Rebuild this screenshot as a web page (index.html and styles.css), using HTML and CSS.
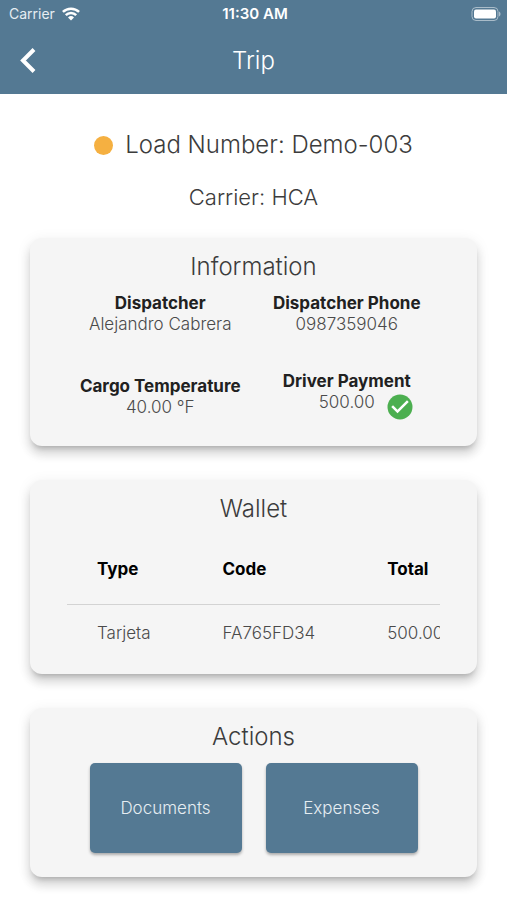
FILE: index.html
```
<!DOCTYPE html>
<html lang="en">
<head>
<meta charset="utf-8">
<meta name="viewport" content="width=device-width, initial-scale=1">
<title>Trip</title>
<link rel="stylesheet" href="styles.css">
</head>
<body>
<header class="top">
  <div class="status">
    <div class="status-carrier">
      <span>Carrier</span>
      <svg class="wifi" viewBox="0 0 20 14" aria-hidden="true">
        <path d="M1.900 4.900a11.700 11.700 0 0 1 16.200 0" />
        <path d="M4.800 8.200a7.300 7.300 0 0 1 10.400 0" />
        <path class="wifi-dot" d="M10 13.500 7 10.500a4.300 4.300 0 0 1 6 0z" />
      </svg>
    </div>
    <div class="status-time">11:30 AM</div>
    <div class="status-battery">
      <svg class="battery" viewBox="0 0 30 14" aria-hidden="true">
        <rect class="battery-case" x="1" y="0.500" width="26" height="13" rx="4" />
        <rect class="battery-level" x="3" y="2.500" width="22" height="9" rx="2" />
        <path class="battery-tip" d="M28 4.500c2 .8 2 4.200 0 5z" />
      </svg>
    </div>
  </div>
  <nav class="bar">
    <button class="back" type="button" aria-label="Back">
      <svg viewBox="0 0 16 26" aria-hidden="true"><path d="M14 1.500 3 12.500l11 11" /></svg>
    </button>
    <h1 class="bar-title">Trip</h1>
  </nav>
</header>
<main class="page">
  <div class="load"><span class="dot"></span><h2 class="load-number">Load Number: Demo-003</h2></div>
  <p class="carrier">Carrier: HCA</p>

  <section class="card">
    <h2 class="card-title">Information</h2>
    <dl class="info">
      <div><dt>Dispatcher</dt><dd>Alejandro Cabrera</dd></div>
      <div><dt>Dispatcher Phone</dt><dd>0987359046</dd></div>
      <div><dt>Cargo Temperature</dt><dd>40.00 °F</dd></div>
      <div>
        <dt>Driver Payment</dt>
        <dd class="payment">
          <span class="amount">500.00</span>
          <svg class="check" viewBox="0 0 24 24" aria-hidden="true"><path class="check-disc" d="M12 2a10 10 0 1 0 0 20 10 10 0 0 0 0-20z" /><path class="check-tick" d="M10 17l-5-5 1.410-1.410L10 14.170l7.590-7.590L19 8z" /></svg>
        </dd>
      </div>
    </dl>
  </section>

  <section class="card">
    <h2 class="card-title">Wallet</h2>
    <div class="table-scroll">
      <table class="wallet">
        <thead><tr><th>Type</th><th>Code</th><th>Total</th></tr></thead>
        <tbody><tr><td>Tarjeta</td><td>FA765FD34</td><td>500.00</td></tr></tbody>
      </table>
    </div>
  </section>

  <section class="card">
    <h2 class="card-title">Actions</h2>
    <div class="actions">
      <button class="action" type="button">Documents</button>
      <button class="action" type="button">Expenses</button>
    </div>
  </section>
</main>
</body>
</html>
```
FILE: styles.css
```
* { box-sizing: border-box; }

body {
  margin: 0;
  background: #fff;
  color: #3c3c3c;
  font: 300 17px/21px Inter, "Liberation Sans", sans-serif;
}

h1, h2, p, dl, dd { margin: 0; font-weight: 300; }
button { border: 0; padding: 0; font: inherit; color: inherit; cursor: pointer; }

.top { background: #547993; color: #fff; }

.status {
  display: grid;
  grid-template-columns: 1fr auto 1fr;
  align-items: center;
  height: 27px;
  padding: 0 6px 0 9px;
  font-size: 14px;
  font-weight: 400;
}
.status-carrier { display: flex; align-items: center; gap: 6px; color: #e6edf2; }
.status-time { font-size: 15px; font-weight: 600; }
.status-battery { display: flex; justify-content: flex-end; }
.wifi { width: 20px; height: 14px; fill: none; stroke: #fff; stroke-width: 2.5; }
.wifi-dot { fill: #fff; stroke: none; }
.battery { width: 30px; height: 14px; }
.battery-case { fill: none; stroke: #a9bcc9; stroke-width: 1; }
.battery-level { fill: #fff; }
.battery-tip { fill: #a9bcc9; }

.bar {
  display: grid;
  grid-template-columns: 48px 1fr 48px;
  align-items: center;
  height: 67px;
  padding: 0 4px;
}
.back { display: grid; place-items: center; height: 48px; background: none; }
.back svg { width: 16px; height: 26px; fill: none; stroke: #fff; stroke-width: 4; }
.bar-title { font-size: 24px; line-height: 30px; text-align: center; }

.page { padding: 36px 30px 24px; }

.load { display: flex; justify-content: center; align-items: center; gap: 12px; }
.dot { width: 19px; height: 19px; border-radius: 50%; background: #f5b041; }
.load-number { font-size: 24px; line-height: 30px; }
.carrier { margin: 22px 0 26px; font-size: 22px; line-height: 30px; text-align: center; }

.card {
  margin-bottom: 34px;
  padding: 14px 37px 24px;
  border-radius: 12px;
  background: #f5f5f5;
  box-shadow: 0 5px 5px -3px rgba(0, 0, 0, .2), 0 8px 10px 1px rgba(0, 0, 0, .12), 0 3px 14px 2px rgba(0, 0, 0, .06);
}
.card-title { margin-bottom: 11px; font-size: 24px; line-height: 30px; text-align: center; }

.info {
  display: grid;
  grid-template-columns: 1fr 1fr;
  row-gap: 36px;
  align-items: center;
  color: #4a4a4a;
  text-align: center;
}
.info dt { color: #212121; font-weight: 700; white-space: nowrap; }
.payment { display: grid; grid-template-columns: 1fr auto 1fr; column-gap: 10px; }
.amount { grid-column: 2; }
.check { width: 30px; height: 30px; }
.check-disc { fill: #4caf50; }
.check-tick { fill: #fff; }

.table-scroll { margin-bottom: -12px; overflow-x: auto; scrollbar-width: none; }
.wallet { width: max-content; border-collapse: collapse; color: #4a4a4a; text-align: left; }
.wallet th { height: 69px; padding: 0 36px; color: #000; font-weight: 700; }
.wallet td { height: 58px; padding: 0 36px; border-top: 1px solid #d3d3d3; }
.wallet th:first-child, .wallet td:first-child { padding-left: 30px; }
.wallet th:last-child, .wallet td:last-child { padding-right: 30px; }

.actions { display: flex; justify-content: center; gap: 24px; }
.action {
  width: 152px;
  height: 90px;
  border-radius: 5px;
  background: #547993;
  color: #e6edf2;
  box-shadow: 0 2px 3px rgba(0, 0, 0, .3);
}
```
